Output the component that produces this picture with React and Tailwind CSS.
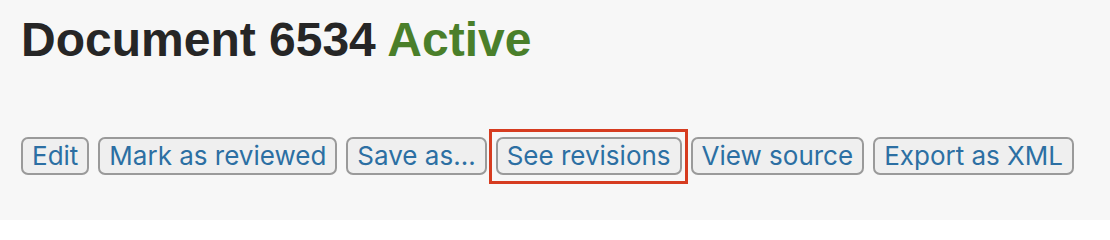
import React from "react";

const actions = [
  { label: "Edit" },
  { label: "Mark as reviewed" },
  { label: "Save as..." },
  { label: "See revisions", highlight: true },
  { label: "View source" },
  { label: "Export as XML" },
];

export default function App() {
  return (
    <div className="w-[1110px] h-[220px] bg-[#f7f7f7] px-[21px] pt-[16px]">
      {/* Title */}
      <h1 className="font-['Liberation_Sans',Arial,sans-serif] font-bold text-[48px] leading-[48px] text-[#262626]">
        Document 6534 <span className="text-[#4a7f2a]">Active</span>
      </h1>

      {/* Action buttons */}
      <div className="flex items-center gap-[9px] mt-[73px]">
        {actions.map((item, index) => (
          <div key={index} className="relative">
            <button className="h-[38px] px-[9px] border-2 border-[#9a9a9a] rounded-[7px] bg-[#efefef] text-[#2c6fa3] text-[26px] leading-none font-normal font-['Inter','Liberation_Sans',sans-serif]">
              {item.label}
            </button>
            {item.highlight && (
              <span className="absolute -left-[7px] -right-[6px] -top-[8px] -bottom-[9px] border-[3px] border-[#d63c20] pointer-events-none" />
            )}
          </div>
        ))}
      </div>
    </div>
  );
}
